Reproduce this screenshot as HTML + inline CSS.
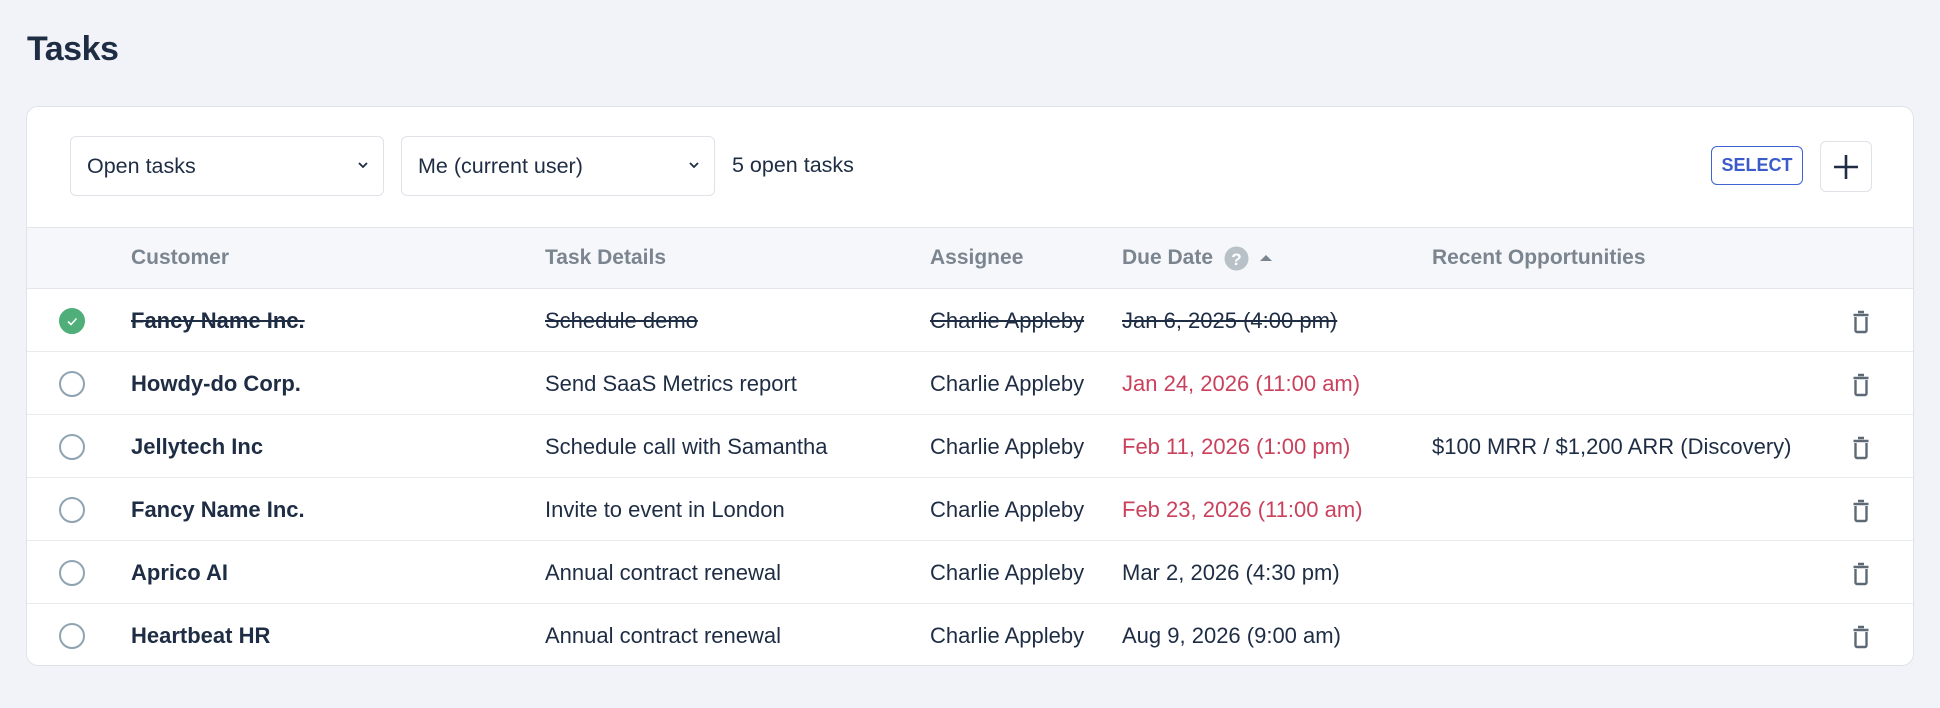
<!DOCTYPE html>
<html><head><meta charset="utf-8"><style>
*{box-sizing:border-box;margin:0;padding:0}
body{width:1940px;height:708px;background:#f2f3f8;font-family:"Liberation Sans",sans-serif;color:#1e2d44;position:relative;overflow:hidden}
.abs{position:absolute}
h1{position:absolute;left:27px;top:30px;font-size:34px;font-weight:bold;color:#1e2d44;letter-spacing:-0.5px}
.card{position:absolute;left:26px;top:106px;width:1888px;height:560px;background:#fff;border:1px solid #dfe3e8;border-radius:12px;overflow:hidden}
.dd{position:absolute;top:29px;height:60px;border:1px solid #dfe2e7;border-radius:6px;font-size:21.5px;line-height:58px;padding-left:16px;color:#1e2d44}
.dd svg{position:absolute;right:14px;top:24px}
.hdr{position:absolute;left:0;top:120px;width:100%;height:62px;background:#f6f7fa;border-top:1px solid #e3e6ea;border-bottom:1px solid #e3e6ea}
.hdr span{position:absolute;top:18px;font-size:21px;font-weight:bold;color:#7b858f}
.row{position:absolute;left:0;width:100%;height:63px;border-bottom:1px solid #e8ebee}
.row span{position:absolute;top:19px;font-size:22px;white-space:nowrap}
.row .c{font-weight:bold}
.red{color:#c9415c}
.s{text-decoration:line-through}
.chk{position:absolute;left:32px;top:19px;width:26px;height:26px;border-radius:50%;border:2px solid #8fa4b0}
.tr{position:absolute;left:1825px;top:21px}
</style></head><body>
<h1>Tasks</h1>
<div class="card">
 <div class="dd" style="left:43px;width:314px">Open tasks<svg width="12" height="8" viewBox="0 0 12 8"><path d="M2 2l4 4 4-4" stroke="#1e2d44" stroke-width="1.8" fill="none"/></svg></div>
 <div class="dd" style="left:374px;width:314px">Me (current user)<svg width="12" height="8" viewBox="0 0 12 8"><path d="M2 2l4 4 4-4" stroke="#1e2d44" stroke-width="1.8" fill="none"/></svg></div>
 <div class="abs" style="left:705px;top:46px;font-size:21.5px">5 open tasks</div>
 <div class="abs" style="left:1684px;top:39px;width:92px;height:39px;border:1.5px solid #3f63d3;border-radius:6px;color:#3a5bc9;font-weight:bold;font-size:18px;text-align:center;line-height:36px">SELECT</div>
 <div class="abs" style="left:1793px;top:34px;width:52px;height:51px;border:1px solid #dfe2e7;border-radius:6px"><svg width="52" height="51" viewBox="0 0 52 51" style="position:absolute;left:-1px;top:-1px"><path d="M26 14v24M14 26h24" stroke="#1e2d44" stroke-width="2.6"/></svg></div>
 <div class="hdr">
  <span style="left:104px">Customer</span>
  <span style="left:518px">Task Details</span>
  <span style="left:903px">Assignee</span>
  <span style="left:1095px">Due Date</span>
  <svg class="abs" style="left:1197px;top:18px" width="25" height="25" viewBox="0 0 25 25"><circle cx="12.5" cy="12.5" r="12" fill="#b8c1c8"/><text x="12.5" y="19" text-anchor="middle" font-family="Liberation Sans" font-weight="bold" font-size="17" fill="#fff">?</text></svg>
  <svg class="abs" style="left:1232px;top:25px" width="14" height="10" viewBox="0 0 14 10"><path d="M1 8L7 2l6 6z" fill="#7b858f"/></svg>
  <span style="left:1405px">Recent Opportunities</span>
 </div>
 <div class="row" style="top:182px"><div class="chk" style="background:#4fae7a;border-color:#4fae7a"><svg width="22" height="22" viewBox="0 0 22 22" style="position:absolute;left:0;top:0"><path d="M7 11.5l3 3 5.5-6" stroke="#fff" stroke-width="1.6" fill="none"/></svg></div><span class="c s" style="left:104px">Fancy Name Inc.</span><span class="s" style="left:518px">Schedule demo</span><span class="s" style="left:903px">Charlie Appleby</span><span class="s" style="left:1095px">Jan 6, 2025 (4:00 pm)</span><svg class="tr" width="18" height="24" viewBox="0 0 18 24"><path d="M6 2h6M1.5 5h15M3.5 7v13.5a1.5 1.5 0 0 0 1.5 1.5h8a1.5 1.5 0 0 0 1.5-1.5V7" stroke="#5d6a75" stroke-width="2.4" fill="none"/></svg></div>
 <div class="row" style="top:245px"><div class="chk"></div><span class="c" style="left:104px">Howdy-do Corp.</span><span style="left:518px">Send SaaS Metrics report</span><span style="left:903px">Charlie Appleby</span><span class="red" style="left:1095px">Jan 24, 2026 (11:00 am)</span><svg class="tr" width="18" height="24" viewBox="0 0 18 24"><path d="M6 2h6M1.5 5h15M3.5 7v13.5a1.5 1.5 0 0 0 1.5 1.5h8a1.5 1.5 0 0 0 1.5-1.5V7" stroke="#5d6a75" stroke-width="2.4" fill="none"/></svg></div>
 <div class="row" style="top:308px"><div class="chk"></div><span class="c" style="left:104px">Jellytech Inc</span><span style="left:518px">Schedule call with Samantha</span><span style="left:903px">Charlie Appleby</span><span class="red" style="left:1095px">Feb 11, 2026 (1:00 pm)</span><span style="left:1405px">$100 MRR / $1,200 ARR (Discovery)</span><svg class="tr" width="18" height="24" viewBox="0 0 18 24"><path d="M6 2h6M1.5 5h15M3.5 7v13.5a1.5 1.5 0 0 0 1.5 1.5h8a1.5 1.5 0 0 0 1.5-1.5V7" stroke="#5d6a75" stroke-width="2.4" fill="none"/></svg></div>
 <div class="row" style="top:371px"><div class="chk"></div><span class="c" style="left:104px">Fancy Name Inc.</span><span style="left:518px">Invite to event in London</span><span style="left:903px">Charlie Appleby</span><span class="red" style="left:1095px">Feb 23, 2026 (11:00 am)</span><svg class="tr" width="18" height="24" viewBox="0 0 18 24"><path d="M6 2h6M1.5 5h15M3.5 7v13.5a1.5 1.5 0 0 0 1.5 1.5h8a1.5 1.5 0 0 0 1.5-1.5V7" stroke="#5d6a75" stroke-width="2.4" fill="none"/></svg></div>
 <div class="row" style="top:434px"><div class="chk"></div><span class="c" style="left:104px">Aprico AI</span><span style="left:518px">Annual contract renewal</span><span style="left:903px">Charlie Appleby</span><span style="left:1095px">Mar 2, 2026 (4:30 pm)</span><svg class="tr" width="18" height="24" viewBox="0 0 18 24"><path d="M6 2h6M1.5 5h15M3.5 7v13.5a1.5 1.5 0 0 0 1.5 1.5h8a1.5 1.5 0 0 0 1.5-1.5V7" stroke="#5d6a75" stroke-width="2.4" fill="none"/></svg></div>
 <div class="row" style="top:497px;border-bottom:none"><div class="chk"></div><span class="c" style="left:104px">Heartbeat HR</span><span style="left:518px">Annual contract renewal</span><span style="left:903px">Charlie Appleby</span><span style="left:1095px">Aug 9, 2026 (9:00 am)</span><svg class="tr" width="18" height="24" viewBox="0 0 18 24"><path d="M6 2h6M1.5 5h15M3.5 7v13.5a1.5 1.5 0 0 0 1.5 1.5h8a1.5 1.5 0 0 0 1.5-1.5V7" stroke="#5d6a75" stroke-width="2.4" fill="none"/></svg></div>
</div>
</body></html>
